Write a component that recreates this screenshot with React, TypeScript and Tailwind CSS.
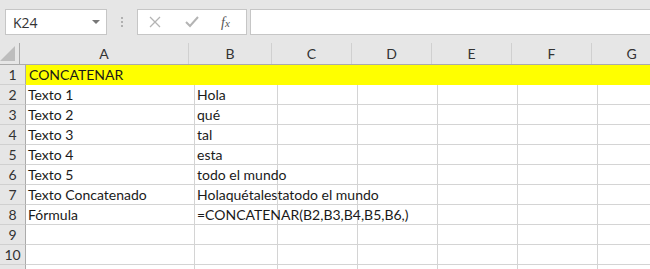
import React from 'react'

const cols = [
  { name: 'A', w: 'w-[169px]' },
  { name: 'B', w: 'w-[83px]' },
  { name: 'C', w: 'w-[80px]' },
  { name: 'D', w: 'w-[80px]' },
  { name: 'E', w: 'w-[80px]' },
  { name: 'F', w: 'w-[80px]' },
  { name: 'G', w: 'w-[80px]' },
]

const rows: [string, string][] = [
  ['CONCATENAR', ''],
  ['Texto 1', 'Hola'],
  ['Texto 2', 'qué'],
  ['Texto 3', 'tal'],
  ['Texto 4', 'esta'],
  ['Texto 5', 'todo el mundo'],
  ['Texto Concatenado', 'Holaquétalestatodo el mundo'],
  ['Fórmula', '=CONCATENAR(B2,B3,B4,B5,B6,)'],
  ['', ''],
  ['', ''],
  ['', ''],
]

const cellFont = { fontFamily: 'Lato, "Open Sans", sans-serif' }

export default function App() {
  return (
    <div className="w-[650px] h-[269px] overflow-hidden bg-white text-[#1a1a1a]" style={{ fontFamily: '"Open Sans", "Noto Sans", sans-serif' }}>
      {/* formula bar */}
      <div className="h-[43px] bg-[#e6e6e6] flex items-start pt-[9px]">
        <div className="ml-[5px] w-[102px] h-[26px] bg-white border border-[#c6c6c6] flex items-center justify-between pl-[7px] pr-[6px]">
          <span className="text-[14px] text-[#333]">K24</span>
          <span className="w-0 h-0 border-l-[4px] border-r-[4px] border-t-[4px] border-l-transparent border-r-transparent border-t-[#777]" />
        </div>
        <div className="w-[30px] h-[26px] flex flex-col items-center justify-center gap-[2px]">
          <span className="w-[2px] h-[2px] bg-[#b0b0b0]" />
          <span className="w-[2px] h-[2px] bg-[#b0b0b0]" />
          <span className="w-[2px] h-[2px] bg-[#b0b0b0]" />
        </div>
        <div className="w-[110px] h-[26px] bg-white border border-[#c6c6c6] flex items-center">
          <svg width="12" height="12" viewBox="0 0 12 12" className="ml-[11px]">
            <path d="M1 1 L11 11 M11 1 L1 11" stroke="#b4b4b4" strokeWidth="1.3" fill="none" />
          </svg>
          <svg width="14" height="12" viewBox="0 0 14 12" className="ml-[24px]">
            <path d="M1 6 L5 10 L13 1" stroke="#b4b4b4" strokeWidth="2" fill="none" />
          </svg>
          <span className="ml-[22px] text-[14px] italic text-[#555]" style={{ fontFamily: '"Liberation Serif", serif' }}>
            f<span className="text-[11px]">x</span>
          </span>
        </div>
        <div className="ml-[3px] flex-1 h-[26px] bg-white border-y border-l border-[#c6c6c6]" />
      </div>

      {/* column headers */}
      <div className="flex h-[22px] bg-[#e6e6e6] border-b border-[#ababab]">
        <div className="w-[26px] border-r border-[#ababab] flex items-end justify-end pr-[4px] pb-[3px]">
          <span className="w-0 h-0" style={{ borderBottom: '15px solid #bdbdbd', borderLeft: '15px solid transparent' }} />
        </div>
        {cols.map((c) => (
          <div key={c.name} className={`${c.w} shrink-0 border-r border-[#d0d0d0] flex items-center justify-center text-[14px] text-[#333]`} style={cellFont}>
            {c.name}
          </div>
        ))}
      </div>

      {/* grid rows */}
      {rows.map((r, i) => (
        <div key={i} className={`flex h-[20px] ${i === 0 ? 'bg-[#ffff00]' : ''}`}>
          <div className="w-[26px] shrink-0 bg-[#e6e6e6] border-r border-b border-[#ababab] border-b-[#d0d0d0] flex items-center justify-center text-[14px] text-[#333]" style={cellFont}>
            {i < 10 ? i + 1 : ''}
          </div>
          {i === 0 ? (
            <div className="flex-1 flex items-center pl-[3px] text-[14px] border-b border-[#ffff00]" style={cellFont}>
              {r[0]}
            </div>
          ) : (
            cols.map((c, j) => (
              <div
                key={c.name}
                className={`${c.w} shrink-0 border-r border-b border-[#d4d4d4] flex items-center pl-[2px] text-[14px] whitespace-nowrap ${j === 1 ? 'overflow-visible relative z-10' : 'overflow-hidden'}`}
                style={cellFont}
              >
                {j === 0 ? r[0] : j === 1 ? r[1] : ''}
              </div>
            ))
          )}
        </div>
      ))}
    </div>
  )
}
